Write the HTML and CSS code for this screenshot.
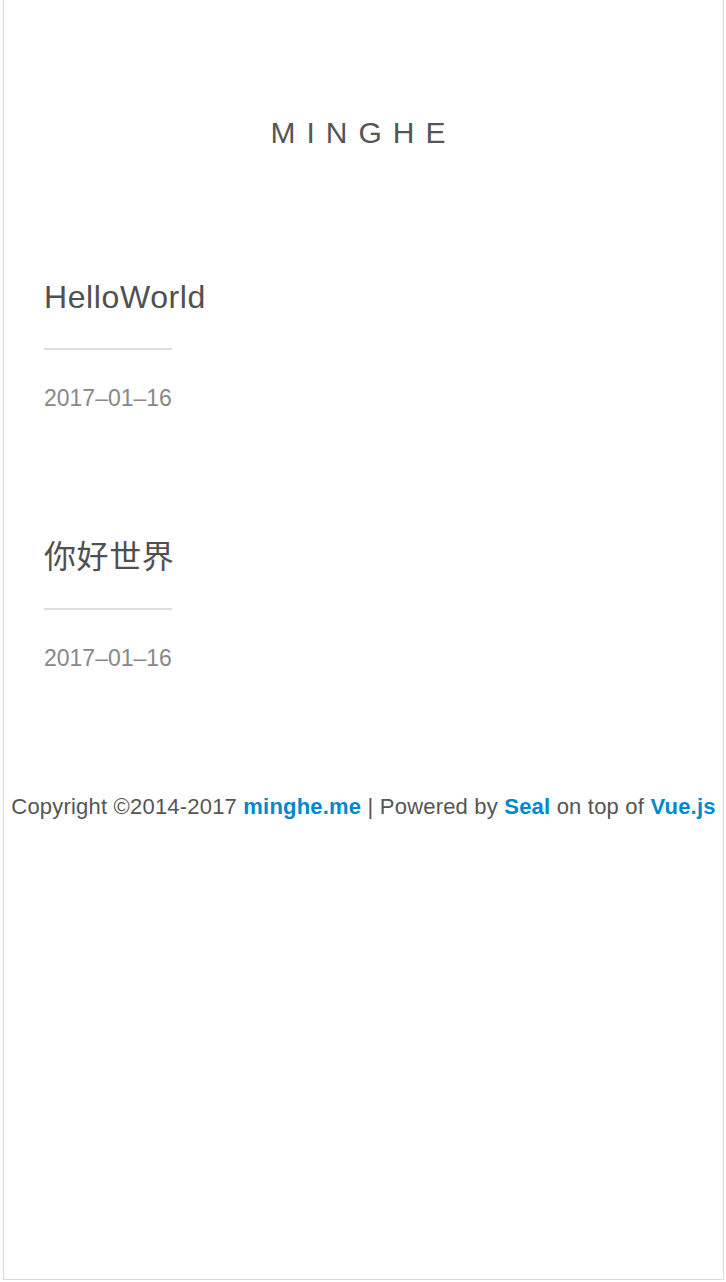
FILE: index.html
```html
<!DOCTYPE html>
<html lang="en">
<head>
<meta charset="utf-8">
<title>MINGHE</title>
<link rel="stylesheet" href="styles.css">
</head>
<body>
<div class="frame">
  <header class="site-header">
    <h1 class="site-title">MINGHE</h1>
  </header>
  <main class="posts">
    <article class="post">
      <h2 class="post-title">HelloWorld</h2>
      <hr class="post-rule">
      <div class="post-date">2017–01–16</div>
    </article>
    <article class="post">
      <h2 class="post-title">你好世界</h2>
      <hr class="post-rule">
      <div class="post-date">2017–01–16</div>
    </article>
  </main>
  <footer class="site-footer">
    Copyright ©2014-2017 <a class="link" href="#">minghe.me</a> | Powered by <a class="link" href="#">Seal</a> on top of <a class="link" href="#">Vue.js</a>
  </footer>
</div>
</body>
</html>
```
FILE: styles.css
```css
html, body {
  margin: 0;
  padding: 0;
  background: #fff;
}
body {
  font-family: "Liberation Sans", "Noto Sans CJK SC", sans-serif;
  color: #555;
}
.frame {
  margin: 0 2px 0 3px;
  height: 1280px;
  box-sizing: border-box;
  border: 1px solid #d9d9d9;
  border-top: none;
  display: flex;
  flex-direction: column;
}
.site-header {
  padding-top: 118px;
  text-align: center;
}
.site-title {
  margin: 0;
  font-size: 30px;
  line-height: 30px;
  font-weight: normal;
  letter-spacing: 11px;
  color: #555;
}
.posts {
  padding: 133px 0 0 40px;
  display: flex;
  flex-direction: column;
  gap: 132px;
}
.post {
  display: flex;
  flex-direction: column;
  align-items: flex-start;
}
.post-title {
  margin: 0;
  font-size: 32px;
  line-height: 32px;
  font-weight: normal;
  letter-spacing: 0.6px;
  color: #505050;
}
.post-rule {
  margin: 35px 0 0;
  width: 128px;
  height: 2px;
  border: none;
  background: #ddd;
}
.post-date {
  margin-top: 37px;
  font-size: 23px;
  line-height: 22px;
  color: #888;
}
.site-footer {
  margin-top: 127px;
  text-align: center;
  font-size: 22px;
  line-height: 22px;
  letter-spacing: 0.2px;
  color: #555;
  white-space: nowrap;
}
.link {
  color: #0088cc;
  font-weight: bold;
  text-decoration: none;
}
```
